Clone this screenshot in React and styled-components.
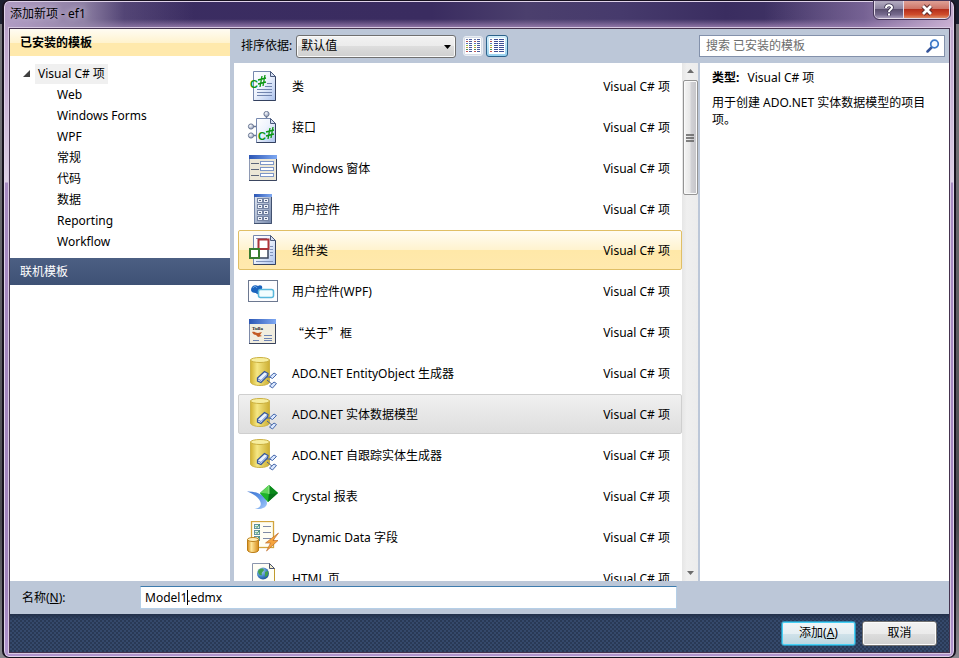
import React from 'react';
import styled, { createGlobalStyle, css } from 'styled-components';

//////////////////////////////////////////////

const GlobalStyle = createGlobalStyle`
  * {
    box-sizing: border-box;
  }
  body {
    margin: 0;
    background: linear-gradient(#1b2030 0, #1b2030 24px, #77777c 24px, #6d6d72 180px, #4a4a50 520px, #87878c 100%);
    color: #000;
  }
  body, button, input, select {
    font-family: 'Noto Sans', 'Noto Sans CJK SC', sans-serif;
    font-size: 12px;
    line-height: 16px;
  }
  ul {
    list-style: none;
    margin: 0;
    padding: 0;
  }
`;

const Desktop = styled.div`
  display: flex;
  height: 100vh;
  min-height: 400px;
  padding: 0 3px 0 2px;
`;

const WindowDiv = styled.div`
  flex: 1;
  min-width: 0;
  display: flex;
  flex-direction: column;
  padding: 0 4px 4px 5px;
  border: 2px solid #17121f;
  border-top-width: 1px;
  border-bottom-width: 1px;
  border-radius: 7px;
  box-shadow: inset 0 0 0 1px #e0d3ea;
  background:
    linear-gradient(90deg, rgba(181, 160, 199, .95) 0, rgba(150, 136, 170, .9) 80px, rgba(120, 106, 148, .4) 120px, transparent 190px) 0 0 / 100% 29px no-repeat,
    linear-gradient(270deg, rgba(212, 186, 219, .9) 0, rgba(150, 125, 175, .6) 90px, transparent 190px) 0 0 / 100% 29px no-repeat,
    linear-gradient(transparent 18px, #a184b4 28px) 0 0 / 100% 29px no-repeat,
    linear-gradient(90deg, #3b2d62 0, #3a2c60 45%, #4b3f6d 55%, #463a6c 65%, #3a2d60 76%, #4d4170 100%) 0 0 / 100% 29px no-repeat,
    linear-gradient(#b79dc6 0, #c6afd3 80px, #dccfe4 181px, #a78bc1 182px, #a184bd 90%, #b094cc 100%);
`;

const TitleBar = styled.header`
  display: flex;
  height: 27px;
  flex: none;
  align-items: flex-start;
  h1 {
    margin: 0;
    padding: 5px 0 0 1px;
    font-size: 12px;
    font-weight: 400;
    text-shadow: 0 0 6px #cfc4dd, 0 0 8px #b9adcb;
  }
`;

const CaptionButtons = styled.div`
  display: flex;
  margin-left: auto;
  border: 1px solid #e4dbe9;
  border-top: 0;
  border-radius: 0 0 5px 5px;
  overflow: hidden;
  outline: 1px solid #453658;
`;

const CaptionButton = styled.button`
  display: flex;
  align-items: center;
  justify-content: center;
  width: ${({ $close }) => ($close ? 46 : 28)}px;
  height: 17px;
  padding: 0;
  border: 0;
  border-left: ${({ $close }) => ($close ? '1px solid #e4dbe9' : '0')};
  background: ${({ $close }) => ($close
    ? 'linear-gradient(#dfa196 0, #ce7567 45%, #b52f1b 50%, #cf4c2c 80%, #dd8c66 100%)'
    : 'linear-gradient(#b5aec2 0, #8d84a0 45%, #5b5070 50%, #766a8d 80%, #a79cba 100%)')};
`;

const Client = styled.main`
  flex: 1;
  min-height: 0;
  display: flex;
  flex-direction: column;
  border: 1px solid #45334f;
  outline: 1px solid #d8c9e2;
  background: #bcc7d8;
`;

const Body = styled.div`
  flex: 1;
  min-height: 0;
  display: flex;
`;

const Sidebar = styled.nav`
  flex: none;
  width: 220px;
  background: #fff;
`;

const Section = styled.button`
  display: block;
  width: 100%;
  height: 27px;
  padding: 0 10px;
  border: 0;
  text-align: left;
  ${({ $active }) => ($active ? css`
    font-weight: 700;
    background: linear-gradient(#fffcf3 0, #fff3cf 50%, #ffe9ac 52%, #ffe9ac 100%);
  ` : css`
    color: #fff;
    background: linear-gradient(#4c5f83, #3e5175);
  `)}
`;

const Tree = styled.div`
  padding: 7px 0 6px 12px;
`;

const TreeRoot = styled.div`
  display: flex;
  align-items: center;
  height: 21px;
  gap: 4px;
  span {
    padding: 2px 3px;
    background: #f0f0f0;
  }
`;

const TreeList = styled.ul`
  padding-left: 35px;
  li {
    height: 21px;
    line-height: 21px;
  }
`;

const Content = styled.section`
  flex: 1;
  min-width: 0;
  display: flex;
  flex-direction: column;
  padding-left: 4px;
`;

const Toolbar = styled.div`
  flex: none;
  display: flex;
  align-items: center;
  height: 34px;
  padding: 0 4px 0 7px;
`;

const SelectBox = styled.div`
  position: relative;
  width: 160px;
  margin: 0 7px 0 4px;
  select {
    display: block;
    appearance: none;
    width: 100%;
    height: 23px;
    padding: 0 4px;
    color: #000;
    border: 1px solid #707070;
    border-radius: 3px;
    box-shadow: inset 0 0 0 1px #fafafa;
    background: linear-gradient(#f2f2f2 0, #ebebeb 50%, #dddddd 50%, #cfcfcf 100%);
  }
  svg {
    position: absolute;
    right: 5px;
    top: 10px;
    pointer-events: none;
  }
`;

const ViewButton = styled.button`
  display: flex;
  align-items: center;
  justify-content: center;
  width: ${({ $active }) => ($active ? 22 : 20)}px;
  height: ${({ $active }) => ($active ? 22 : 20)}px;
  margin-right: 3px;
  padding: 0;
  border-radius: 3px;
  border: 1px solid ${({ $active }) => ($active ? '#2c628b' : '#e9edf3')};
  background: ${({ $active }) => ($active ? 'linear-gradient(#d5eefb 0, #b8e2f6 50%, #98d1ef 100%)' : '#d5dce7')};
`;

const SearchBox = styled.label`
  display: flex;
  align-items: center;
  width: 246px;
  height: 22px;
  margin-left: auto;
  padding: 0 4px 0 6px;
  border: 1px solid #8391ab;
  background: #fff;
  input {
    flex: 1;
    min-width: 0;
    padding: 0;
    border: 0;
    outline: 0;
    background: none;
  }
  input::placeholder {
    color: #6d6d6d;
    opacity: 1;
  }
`;

const Panes = styled.div`
  flex: 1;
  min-height: 0;
  display: flex;
  background: #fff;
`;

const TemplateList = styled.ul`
  flex: 1;
  min-width: 0;
  overflow: hidden;
  padding: 3px 0 0 4px;
`;

const rowStates = {
  hover: css`
    border-color: #e0bf66;
    background: linear-gradient(#fffcf3 0, #fff3cf 49%, #ffe8a8 51%, #ffe9ae 100%);
  `,
  selected: css`
    border-color: #cfcfcf;
    background: linear-gradient(#f0f0f0, #dedede);
  `,
};

const TemplateRow = styled.li`
  display: flex;
  align-items: center;
  height: 40px;
  margin-bottom: 1px;
  padding: 0 11px 0 8px;
  border: 1px solid transparent;
  border-radius: 2px;
  ${({ $state }) => rowStates[$state]}
  svg {
    flex: none;
    margin-right: 13px;
  }
  span {
    padding-top: 2px;
    white-space: nowrap;
  }
`;

const TemplateName = styled.span`
  flex: 1;
  ${({ $wide }) => $wide && "font-family: 'Noto Sans CJK SC', sans-serif;"}
`;

const ScrollBar = styled.div`
  flex: none;
  display: flex;
  flex-direction: column;
  align-items: center;
  width: 16px;
  padding: 6px 0;
  background: linear-gradient(90deg, #e6e6e6, #efefef 30%, #ececec);
`;

const ScrollThumb = styled.div`
  display: flex;
  align-items: center;
  justify-content: center;
  width: 15px;
  height: 115px;
  margin: 7px 0 auto;
  border: 1px solid #949494;
  border-radius: 2px;
  box-shadow: inset 0 0 0 1px #fafafa;
  background: linear-gradient(90deg, #f5f5f5 0, #e7e7e7 48%, #d2d2d6 52%, #c4c4c8 100%);
`;

const Details = styled.aside`
  flex: none;
  width: 251px;
  padding: 6px 12px;
  border-left: 2px solid #bcc7d8;
  line-height: 17px;
  p {
    margin: 0 0 8px;
  }
  b {
    margin-right: 5px;
  }
`;

const NameBar = styled.div`
  flex: none;
  display: flex;
  align-items: center;
  height: 33px;
  padding-left: 12px;
  label {
    width: 118px;
  }
`;

const NameField = styled.div`
  position: relative;
  width: 537px;
  input {
    display: block;
    width: 100%;
    height: 23px;
    padding: 0 4px;
    border: 1px solid #b5cfe7;
    border-top-color: #3d7bad;
    outline: 0;
    background: #fff;
  }
`;

const Caret = styled.i`
  position: absolute;
  left: 47px;
  top: 4px;
  width: 1px;
  height: 15px;
  background: #000;
`;

const Footer = styled.footer`
  flex: none;
  display: flex;
  align-items: center;
  justify-content: flex-end;
  gap: 6px;
  height: 38px;
  padding: 0 12px;
  background:
    linear-gradient(#22304a, transparent 6px),
    conic-gradient(#35496b 25%, transparent 0) 0 0 / 4px 4px,
    conic-gradient(#35496b 25%, transparent 0) 2px 2px / 4px 4px,
    #293955;
`;

const DialogButton = styled.button`
  width: 75px;
  height: 25px;
  padding: 0;
  border-radius: 3px;
  border: 1px solid ${({ $primary }) => ($primary ? '#2b8fb5' : '#707070')};
  box-shadow: inset 0 0 0 1px ${({ $primary }) => ($primary ? '#48d0f5' : '#fcfcfc')};
  background: ${({ $primary }) => ($primary
    ? 'linear-gradient(#f0f5f7 0, #e6eff3 50%, #d0e2ea 52%, #bcd5df 100%)'
    : 'linear-gradient(#f2f2f2 0, #ebebeb 50%, #dddddd 52%, #cfcfcf 100%)')};
`;

//////////////////////////////////////////////

const Icon = ({ children }) => (
  <svg width="32" height="32" viewBox="0 0 32 32" aria-hidden="true">{children}</svg>
);

const HiddenSvg = styled.svg`
  position: absolute;
`;

const Defs = () => (
  <HiddenSvg width="0" height="0" aria-hidden="true">
    <defs>
      <linearGradient id="paper" x1="0" y1="0" x2="1" y2="1">
        <stop offset="0" stopColor="#fff" />
        <stop offset=".45" stopColor="#eef3fd" />
        <stop offset="1" stopColor="#aac1ec" />
      </linearGradient>
      <linearGradient id="steel" x1="0" y1="0" x2="1" y2="1">
        <stop offset="0" stopColor="#e3e9f3" />
        <stop offset="1" stopColor="#7487ab" />
      </linearGradient>
      <linearGradient id="bar" x1="0" x2="1">
        <stop offset="0" stopColor="#2c56b4" />
        <stop offset="1" stopColor="#7fa9f2" />
      </linearGradient>
      <linearGradient id="gold" x1="0" x2="1">
        <stop offset="0" stopColor="#d2b22f" />
        <stop offset=".35" stopColor="#f5e784" />
        <stop offset="1" stopColor="#cdaf32" />
      </linearGradient>
      <linearGradient id="orange" x1="0" x2="1">
        <stop offset="0" stopColor="#d98a14" />
        <stop offset=".35" stopColor="#ffe79a" />
        <stop offset="1" stopColor="#d68a18" />
      </linearGradient>
      <linearGradient id="swoosh" x1="0" x2="1" y2="1">
        <stop offset="0" stopColor="#3f74d0" />
        <stop offset=".5" stopColor="#5f97e8" />
        <stop offset="1" stopColor="#a9ccfa" />
      </linearGradient>
      <radialGradient id="ball" cx=".35" cy=".3" r=".8">
        <stop offset="0" stopColor="#fff" />
        <stop offset="1" stopColor="#8694b4" />
      </radialGradient>
      <radialGradient id="globe" cx=".35" cy=".3" r=".8">
        <stop offset="0" stopColor="#b9ddf8" />
        <stop offset=".6" stopColor="#3e7fc4" />
        <stop offset="1" stopColor="#1c4a8c" />
      </radialGradient>
    </defs>
  </HiddenSvg>
);

const Sheet = () => (
  <>
    <path d="M6.500 1.500H23.500L28.500 6.500V30.500H6.500Z" fill="url(#paper)" stroke="#7688ae" />
    <path d="M28.500 6.500V30.500H6.500" fill="none" stroke="#34415f" />
    <path d="M23.500 1.500V6.500H28.500Z" fill="#d4def2" stroke="#4b5a7c" />
  </>
);

// the C stays upright, the sharp leans and sits a little higher
const Sharp = ({ x, y }) => (
  <g>
    <text x={x} y={y} fill="#0b9712" fontFamily="Liberation Sans, sans-serif" fontSize="11" fontWeight="700">C</text>
    <path
      d={`M${x + 10} ${y - 1}l2 -11M${x + 13} ${y - 2}l2 -11M${x + 8} ${y - 4}l8 -2M${x + 8} ${y - 8}l8 -2`}
      stroke="#0b9712"
      strokeWidth="1.300"
    />
  </g>
);

const ClassIcon = () => (
  <Icon>
    <Sheet />
    <path d="M20 13.500H25M18 16.500H25M10 19.500H25M10 22.500H25M10 25.500H25" stroke="#7184ae" />
    <Sharp x={3} y={18} />
  </Icon>
);

const InterfaceIcon = () => (
  <Icon>
    <path d="M19.500 5V9M6 15.500H11M6 24.500H11" stroke="#6b7892" strokeWidth="1.500" />
    <path d="M9.500 7.500H23.500L28.500 12.500V31.500H9.500Z" fill="url(#paper)" stroke="#7688ae" />
    <path d="M28.500 12.500V31.500H9.500" fill="none" stroke="#34415f" />
    <path d="M23.500 7.500V12.500H28.500Z" fill="#d4def2" stroke="#4b5a7c" />
    <circle cx="19.500" cy="3" r="2.600" fill="url(#ball)" stroke="#6d7a96" />
    <circle cx="4" cy="15.500" r="2.600" fill="url(#ball)" stroke="#6d7a96" />
    <circle cx="4" cy="24.500" r="2.600" fill="url(#ball)" stroke="#6d7a96" />
    <Sharp x={11} y={29} />
  </Icon>
);

const FormIcon = () => (
  <Icon>
    <rect x="2.500" y="3.500" width="27" height="25" fill="#ece7d6" stroke="#8e99b3" />
    <path d="M2 28.500H29.500V4" fill="none" stroke="#3b4660" />
    <rect x="2" y="3" width="28" height="4" fill="url(#bar)" />
    <path d="M4 11.500H12M4 17.500H12M4 23.500H12" stroke="#5c6579" />
    <g fill="#fff" stroke="#7f97c8">
      <rect x="13.500" y="9.500" width="13" height="3" />
      <rect x="13.500" y="15.500" width="13" height="3" />
      <rect x="13.500" y="21.500" width="13" height="3" />
    </g>
  </Icon>
);

const UserControlIcon = () => (
  <Icon>
    <rect x="7.500" y="1.500" width="17" height="29" fill="url(#steel)" stroke="#7486a8" />
    <path d="M24.500 2V30.500H7" fill="none" stroke="#42516f" />
    <rect x="7" y="1" width="18" height="3" fill="url(#bar)" />
    {[6, 12, 18, 24].map(y => [11, 17].map(x => (
      <g key={`${x}-${y}`}>
        <rect x={x - .5} y={y - .5} width="5" height="4" fill="#eef2f9" stroke="#7584a3" />
        <path d={`M${x + 1} ${y + 1.5}h2`} stroke="#54617c" />
      </g>
    )))}
  </Icon>
);

const ComponentIcon = () => (
  <Icon>
    <Sheet />
    <path d="M9 4.500H20M23 12.500H26M23 15.500H26M23 18.500H26M23 21.500H26M9 27.500H26" stroke="#8193bb" />
    <rect x="12" y="15" width="9" height="9" fill="#fff" stroke="#39445c" strokeWidth="1.500" />
    <rect x="11.500" y="5.500" width="10" height="9.500" fill="#fff" stroke="#ad3438" strokeWidth="2" />
    <rect x="3" y="15" width="9" height="9" fill="#fff" stroke="#397c2f" strokeWidth="2" />
  </Icon>
);

const WpfIcon = () => (
  <Icon>
    <rect x="1.500" y="5.500" width="29" height="21" fill="#fdfdff" stroke="#6c7890" />
    <path d="M4 15C4 11 8 9 11 11C14 9 17 12 14 15C15 19 11 21 9 18C6 18 4 17 4 15Z" fill="#1a62bd" />
    <path d="M6 13C7 11 9 11 10 13" stroke="#79b4ee" fill="none" />
    <rect x="11.500" y="14.500" width="15" height="8" rx="2" fill="#f2fdff" stroke="#58b7dc" strokeWidth="1.500" />
  </Icon>
);

const AboutIcon = () => (
  <Icon>
    <rect x="2.500" y="3.500" width="26" height="24" fill="#f1eddf" stroke="#7d8aa8" />
    <path d="M2 27.500H28.500V4" fill="none" stroke="#39435c" />
    <rect x="2" y="3" width="27" height="5" fill="url(#bar)" />
    <text x="5" y="14" fontFamily="Liberation Serif, serif" fontSize="5" fontWeight="700" fill="#222">Tulla</text>
    <path d="M5 16C8 15 8 17 11 17L15 16L13 19L15 20L11 21L9 19C7 19 6 18 5 16Z" fill="#c35a24" />
    <path d="M17 19.500H25M17 22.500H25M17 24.500H25M6 24.500H12" stroke="#6d83b3" />
  </Icon>
);

const EntityIcon = () => (
  <Icon>
    <path d="M3.500 3V25C3.500 27 8 28.500 13 28.500S22.500 27 22.500 25V3Z" fill="url(#gold)" stroke="#cdb347" />
    <ellipse cx="13" cy="3" rx="9.500" ry="2.500" fill="#f7ee9e" stroke="#cbb040" />
    <path d="M18 20H26M20 23L26 28" stroke="#4c6393" />
    <path d="M10.500 21L17.500 14.500L21 16.500L20.500 19L14 25.500L10.500 24Z" fill="#eaf2ff" stroke="#35569a" strokeWidth="1.300" />
    <path d="M11 22L14 23.500L20.500 17" fill="none" stroke="#5f82c6" />
    <path d="M22.500 20L27 16L29.500 17.500L25.500 21.500Z" fill="#d9e7ff" stroke="#4668ab" />
    <path d="M22.500 29L27 25L29.500 26.500L25.500 31Z" fill="#d9e7ff" stroke="#4668ab" />
  </Icon>
);

const CrystalIcon = () => (
  <Icon>
    <path d="M0 11.500C9 11 19 15 20 23C20 27 16 29.500 8 29C13 28 15 25 13 21C11 17 7 14 0 11.500Z" fill="url(#swoosh)" />
    <path d="M22 5L13 13L21 22L31 13Z" fill="#12a422" />
    <path d="M22 5L13 13L22 14Z" fill="#63d65c" />
    <path d="M22 5L31 13L22 14Z" fill="#0b8a1c" />
    <path d="M13 13L22 14L21 22Z" fill="#1fb42b" />
    <path d="M31 13L22 14L21 22Z" fill="#07721a" />
    <path d="M22 5V14" stroke="#b9f3ad" strokeWidth=".7" />
  </Icon>
);

const DynamicIcon = () => (
  <Icon>
    <rect x="4.500" y=".5" width="22" height="26" fill="#fffef3" stroke="#d2a43c" strokeWidth="1.300" />
    {[3, 9, 15].map(y => (
      <g key={y}>
        <rect x="7.500" y={y + .5} width="5" height="4" fill="#e0f1ee" stroke="#5f92a0" />
        <path d={`M8.500 ${y + 2}l1.500 1.500l2.500 -3`} fill="none" stroke="#2f8b4b" />
        <path d={`M16 ${y + 2.5}h8`} stroke="#7f8ba6" />
      </g>
    ))}
    <path d="M.5 18.500V29C.5 30.500 3 31.500 6 31.500S11.500 30.500 11.500 29V18.500Z" fill="url(#orange)" stroke="#bb7d16" />
    <ellipse cx="6" cy="18.500" rx="5.500" ry="2" fill="#ffeeb5" stroke="#bf8420" />
    <path d="M31.500 12L18.500 22H23.500L19.500 30L31 19.500H26Z" fill="#f5a43e" stroke="#b5601c" strokeWidth=".6" />
  </Icon>
);

const HtmlIcon = () => (
  <Icon>
    <path d="M5.500 1.500H22.500L27.500 6.500V30.500H5.500Z" fill="#fffef6" stroke="#8b95ad" />
    <path d="M27.500 6.500V30.500" stroke="#c09b2d" />
    <path d="M22.500 1.500V6.500H27.500Z" fill="#f3ebc9" stroke="#4b5570" />
    <circle cx="16" cy="11.500" r="6" fill="url(#globe)" />
    <path d="M11 9C13 6 16 6 17 8C16 10 14 10 15 13C13 14 11 12 11 9ZM18 10L21 9C22 12 20 15 18 15Z" fill="#43a04d" />
  </Icon>
);

const ColumnsIcon = ({ split }) => (
  <svg width="16" height="16" viewBox="0 0 16 16" aria-hidden="true">
    <rect width="16" height="16" fill="#fff" />
    {['#6b7aa8', '#b55252', '#5b77b8', '#8fbf45', '#c79a3b', '#4a8f57', '#c45656'].map((color, i) => (
      <g key={i} strokeWidth="1" shapeRendering="crispEdges">
        <path d={`M1 ${i * 2 + 1.5}h2`} stroke={color} />
        {split
          ? <path d={`M4 ${i * 2 + 1.5}h3M12 ${i * 2 + 1.5}h3`} stroke="#4c5c9e" />
          : <path d={`M5 ${i * 2 + 1.5}h4M10 ${i * 2 + 1.5}h5`} stroke="#3e4f94" />}
        {split && <path d={`M9 ${i * 2 + 1.5}h2`} stroke={color} />}
      </g>
    ))}
  </svg>
);

const SearchIcon = () => (
  <svg width="14" height="14" viewBox="0 0 14 14" aria-hidden="true">
    <path d="M6 8L1.500 12.500" stroke="#34549a" strokeWidth="2.500" strokeLinecap="round" />
    <circle cx="8.500" cy="5" r="3.800" fill="#f4f9ff" stroke="#3c78c8" strokeWidth="1.700" />
  </svg>
);

const Triangle = ({ d, width, height, fill }) => (
  <svg width={width} height={height} viewBox={`0 0 ${width} ${height}`} aria-hidden="true"><path d={d} fill={fill} /></svg>
);

const HelpIcon = () => (
  <svg width="12" height="14" viewBox="0 0 12 14" aria-hidden="true">
    <path d="M3 5C3 1.500 9 1.500 9 4.500C9 6.500 6 6.500 6 9M6 10.500V12.500" fill="none" stroke="#3c3450" strokeWidth="3.600" />
    <path d="M3 5C3 1.500 9 1.500 9 4.500C9 6.500 6 6.500 6 9M6 10.500V12.500" fill="none" stroke="#fff" strokeWidth="2" />
  </svg>
);

const CloseIcon = () => (
  <svg width="14" height="12" viewBox="0 0 14 12" aria-hidden="true">
    <path d="M3 2L11 10M11 2L3 10" stroke="#5c2a2a" strokeWidth="4.600" />
    <path d="M3 2L11 10M11 2L3 10" stroke="#fff" strokeWidth="2.800" />
  </svg>
);

//////////////////////////////////////////////

const categories = ['Web', 'Windows Forms', 'WPF', '常规', '代码', '数据', 'Reporting', 'Workflow'];

const templates = [
  { name: '类', icon: ClassIcon },
  { name: '接口', icon: InterfaceIcon },
  { name: 'Windows 窗体', icon: FormIcon },
  { name: '用户控件', icon: UserControlIcon },
  { name: '组件类', icon: ComponentIcon, state: 'hover' },
  { name: '用户控件(WPF)', icon: WpfIcon },
  { name: '“关于”框', icon: AboutIcon, wide: true },
  { name: 'ADO.NET EntityObject 生成器', icon: EntityIcon },
  { name: 'ADO.NET 实体数据模型', icon: EntityIcon, state: 'selected' },
  { name: 'ADO.NET 自跟踪实体生成器', icon: EntityIcon },
  { name: 'Crystal 报表', icon: CrystalIcon },
  { name: 'Dynamic Data 字段', icon: DynamicIcon },
  { name: 'HTML 页', icon: HtmlIcon },
];

const Categories = () => (
  <Sidebar>
    <Section $active>已安装的模板</Section>
    <Tree>
      <TreeRoot>
        <Triangle width={9} height={7} d="M8 0V7H1Z" fill="#404040" />
        <span>Visual C# 项</span>
      </TreeRoot>
      <TreeList>
        {categories.map(name => <li key={name}>{name}</li>)}
      </TreeList>
    </Tree>
    <Section>联机模板</Section>
  </Sidebar>
);

const TopTools = () => (
  <Toolbar>
    <label htmlFor="sort">排序依据:</label>
    <SelectBox>
      <select id="sort" defaultValue="default">
        <option value="default">默认值</option>
      </select>
      <Triangle width={7} height={4} d="M0 0H7L3.500 4Z" fill="#000" />
    </SelectBox>
    <ViewButton aria-label="小图标"><ColumnsIcon split /></ViewButton>
    <ViewButton $active aria-label="中等图标"><ColumnsIcon /></ViewButton>
    <SearchBox>
      <input type="text" aria-label="搜索" placeholder="搜索 已安装的模板" />
      <SearchIcon />
    </SearchBox>
  </Toolbar>
);

const Template = ({ template }) => {
  const TemplateIcon = template.icon;
  return (
    <TemplateRow $state={template.state}>
      <TemplateIcon />
      <TemplateName $wide={template.wide}>{template.name}</TemplateName>
      <span>Visual C# 项</span>
    </TemplateRow>
  );
};

const App = () => (
  <Desktop>
    <GlobalStyle />
    <Defs />
    <WindowDiv>
      <TitleBar>
        <h1>添加新项 - ef1</h1>
        <CaptionButtons>
          <CaptionButton aria-label="帮助"><HelpIcon /></CaptionButton>
          <CaptionButton $close aria-label="关闭"><CloseIcon /></CaptionButton>
        </CaptionButtons>
      </TitleBar>
      <Client>
        <Body>
          <Categories />
          <Content>
            <TopTools />
            <Panes>
              <TemplateList>
                {templates.map(template => <Template template={template} key={template.name} />)}
              </TemplateList>
              <ScrollBar>
                <Triangle width={7} height={4} d="M3.500 0L7 4H0Z" fill="#6c6c6c" />
                <ScrollThumb>
                  <svg width="8" height="8" aria-hidden="true">
                    <path d="M0 1H8M0 4H8M0 7H8" stroke="#5c5c5c" strokeWidth="1.500" />
                  </svg>
                </ScrollThumb>
                <Triangle width={7} height={4} d="M0 0H7L3.500 4Z" fill="#6c6c6c" />
              </ScrollBar>
              <Details>
                <p><b>类型:</b> Visual C# 项</p>
                <p>用于创建 ADO.NET 实体数据模型的项目项。</p>
              </Details>
            </Panes>
          </Content>
        </Body>
        <NameBar>
          <label htmlFor="name">名称(<u>N</u>):</label>
          <NameField>
            <input id="name" type="text" defaultValue="Model1.edmx" />
            <Caret />
          </NameField>
        </NameBar>
        <Footer>
          <DialogButton $primary>添加(<u>A</u>)</DialogButton>
          <DialogButton>取消</DialogButton>
        </Footer>
      </Client>
    </WindowDiv>
  </Desktop>
);

export default App;
